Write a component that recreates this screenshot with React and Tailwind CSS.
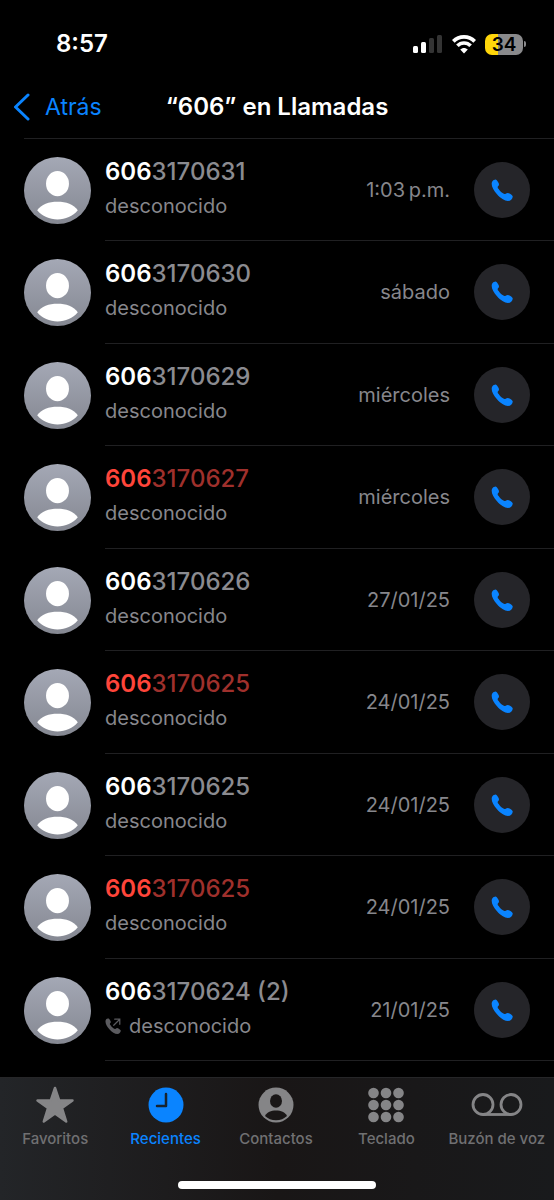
import React from 'react'

const calls = [
  { id: 1, rest: '3170631', date: '1:03\u2009p.m.' },
  { id: 2, rest: '3170630', date: 'sábado' },
  { id: 3, rest: '3170629', date: 'miércoles' },
  { id: 4, rest: '3170627', date: 'miércoles', missed: true },
  { id: 5, rest: '3170626', date: '27/01/25' },
  { id: 6, rest: '3170625', date: '24/01/25', missed: true },
  { id: 7, rest: '3170625', date: '24/01/25' },
  { id: 8, rest: '3170625', date: '24/01/25', missed: true },
  { id: 9, rest: '3170624 (2)', date: '21/01/25', outgoing: true },
]

const HANDSET = 'M2 14C2 7 6 2 12 2C16 1 18 4 21 9C25 15 25 18 21 22C19 24 20 27 23 30C26 35 31 40 36 43C39 45 41 46 44 44C48 41 52 41 57 44C63 48 66 50 65 54C64 60 59 66 51 66C41 66 28 58 18 46C8 34 2 24 2 14Z'

function Signal() {
  return (
    <svg className="w-[30px] h-5" viewBox="0 0 30 20" aria-hidden="true">
      <rect x="0" y="12" width="5" height="7" rx="1.5" fill="#fff" />
      <rect x="8" y="8" width="5" height="11" rx="1.5" fill="#fff" />
      <rect x="16" y="4" width="5" height="15" rx="1.5" fill="#343434" />
      <rect x="24" y="1" width="5" height="18" rx="1.5" fill="#343434" />
    </svg>
  )
}

function Wifi() {
  return (
    <svg className="w-6 h-5" viewBox="1 0 24 20" fill="none" stroke="#fff" aria-hidden="true">
      <path d="M2.3 7.4C8.2 1.4 17.8 1.4 23.7 7.4" strokeWidth="3.8" />
      <path d="M6.4 11.8C10 8 16 8 19.6 11.8" strokeWidth="3.6" />
      <path d="M13 19.4L9.2 15.6C11.3 13.4 14.7 13.4 16.8 15.6Z" fill="#fff" stroke="none" />
    </svg>
  )
}

function Battery() {
  return (
    <div className="flex items-center gap-px">
      <div className="flex h-[21px] w-[38px] items-center justify-center rounded-[7px] bg-linear-to-r from-[#ffd60a] from-34% to-[#8a8a8c] to-34% text-[19px] leading-none font-semibold text-black">34</div>
      <div className="h-[6px] w-[2px] rounded-r-full bg-[#8a8a8c]"></div>
    </div>
  )
}

function Avatar() {
  return (
    <svg className="size-[67px] shrink-0" viewBox="0 0 66 66" aria-hidden="true">
      <defs>
        <linearGradient id="avatar" x1="0" y1="0" x2="0" y2="1">
          <stop offset="0" stopColor="#a4a8b5" />
          <stop offset="1" stopColor="#858892" />
        </linearGradient>
      </defs>
      <circle cx="33" cy="33" r="33" fill="url(#avatar)" />
      <ellipse cx="33" cy="26.3" rx="11.3" ry="12.4" fill="#fff" />
      <path d="M13 52.5C17 46.5 24.5 44 33 44S49 46.5 53 52.5C48 58.5 41 61.5 33 61.5S18 58.5 13 52.5Z" fill="#fff" />
    </svg>
  )
}

function CallRow({ call }) {
  return (
    <li className="flex items-center pl-6 min-h-[102px] even:min-h-[103px]">
      <Avatar />
      <div className="ml-[14px] flex flex-1 items-center self-stretch border-b border-[#202022] pr-6">
        <div className="flex-1 pb-0.5">
          <div className={`text-2xl leading-[35px] font-semibold ${call.missed ? 'text-[#ff453a]' : 'text-white'}`}>
            606<span className={`font-medium ${call.missed ? 'text-[#9f302c]' : 'text-[#8b8b90]'}`}>{call.rest}</span>
          </div>
          <div className="flex items-center gap-2 text-xl leading-[35px] text-[#87878c]">
            {call.outgoing && (
              <svg className="size-4" viewBox="0 0 66 66" role="img" aria-label="Llamada saliente">
                <path d={HANDSET} fill="#5b5b5f" />
                <path d="M36 30L60 6M40 5H61V26" fill="none" stroke="#5b5b5f" strokeWidth="5" strokeLinecap="round" />
              </svg>
            )}
            desconocido
          </div>
        </div>
        <div className="text-xl text-[#87878c]">{call.date}</div>
        <button type="button" aria-label={`Llamar a 606${call.rest}`} className="ml-6 flex size-[56px] items-center justify-center rounded-full bg-[#252529]">
          <svg className="size-[22px]" viewBox="0 0 66 66" fill="#0a84ff" aria-hidden="true">
            <path d={HANDSET} />
          </svg>
        </button>
      </div>
    </li>
  )
}

function StarIcon() {
  return (
    <svg className="w-10 h-10" viewBox="0 0 40 40" fill="currentColor" stroke="currentColor" strokeWidth="2.5" strokeLinejoin="round">
      <path d="M20 3L24.1 15.2L37.5 15.5L27 23.1L31.2 36.5L20 28.6L8.8 36.5L13 23.1L2.5 15.5L15.9 15.2Z" />
    </svg>
  )
}

function ClockIcon() {
  return (
    <svg className="w-10 h-10" viewBox="0 0 40 40">
      <circle cx="20" cy="20" r="17.5" fill="currentColor" />
      <path d="M20 9V21H11" fill="none" stroke="#17232f" strokeWidth="2.5" strokeLinecap="round" strokeLinejoin="round" />
    </svg>
  )
}

function PersonIcon() {
  return (
    <svg className="w-10 h-10" viewBox="0 0 40 40">
      <circle cx="20" cy="20" r="17.5" fill="currentColor" />
      <ellipse cx="20" cy="16" rx="6" ry="6.7" fill="#1a1717" />
      <path d="M9 31C11 27 15 25.5 20 25.5S29 27 31 31C28 33.8 24.5 35.2 20 35.2S12 33.8 9 31Z" fill="#1a1717" />
    </svg>
  )
}

function KeypadIcon() {
  return (
    <svg className="w-10 h-10" viewBox="0 0 40 40" fill="currentColor">
      {[8, 20, 32].map(y => [7.5, 20, 32.5].map(x => (
        <circle key={`${x}-${y}`} cx={x} cy={y} r="5.3" />
      )))}
    </svg>
  )
}

function VoicemailIcon() {
  return (
    <svg className="w-[52px] h-10" viewBox="0 0 52 40" fill="none" stroke="currentColor" strokeWidth="2.8">
      <circle cx="12" cy="19.5" r="10" />
      <circle cx="40" cy="19.5" r="10" />
      <path d="M12 29.5H40" />
    </svg>
  )
}

const tabs = [
  { label: 'Favoritos', Icon: StarIcon },
  { label: 'Recientes', Icon: ClockIcon, active: true },
  { label: 'Contactos', Icon: PersonIcon },
  { label: 'Teclado', Icon: KeypadIcon },
  { label: 'Buzón de voz', Icon: VoicemailIcon },
]

export default function App() {
  return (
    <div className="flex min-h-screen flex-col bg-black font-['Inter','Liberation_Sans',sans-serif] text-white">
      <div className="flex h-[75px] items-center justify-between pt-[13px] pr-7 pl-14">
        <div className="text-2xl font-semibold">8:57</div>
        <div className="flex items-center gap-[9px]">
          <Signal />
          <Wifi />
          <Battery />
        </div>
      </div>

      <header className="grid h-[63px] grid-cols-[1fr_auto_1fr] items-center px-3 pt-px">
        <button type="button" className="flex items-center gap-[13px] text-[23px] text-[#0a84ff]">
          <svg className="h-7 w-5" viewBox="0 0 20 28" fill="none" stroke="currentColor" strokeWidth="3" strokeLinecap="round" strokeLinejoin="round" aria-hidden="true">
            <path d="M16 2L3.5 14L16 26" />
          </svg>
          Atrás
        </button>
        <h1 className="text-2xl font-semibold">“606” en Llamadas</h1>
      </header>

      <main className="flex-1">
        <div className="ml-6 border-t border-[#202022]"></div>
        <ul>
          {calls.map(c => <CallRow key={c.id} call={c} />)}
        </ul>
      </main>

      <footer className="bg-linear-to-r from-[#232528] via-[#191616] to-[#191a1c]">
        <nav className="grid grid-cols-5 border-t border-[#262628] pt-[7px] pr-0.5">
          {tabs.map(({ label, Icon, active }) => (
            <button key={label} type="button" className={`flex flex-col items-center ${active ? 'text-[#0a84ff]' : 'text-[#858587]'}`}>
              <Icon />
              <span className={`text-[15px] leading-7 font-medium whitespace-nowrap ${active ? '' : 'text-[#707072]'}`}>{label}</span>
            </button>
          ))}
        </nav>
        <div className="flex justify-center pt-7 pb-[11px]">
          <div className="h-2 w-[198px] rounded-full bg-white"></div>
        </div>
      </footer>
    </div>
  )
}
